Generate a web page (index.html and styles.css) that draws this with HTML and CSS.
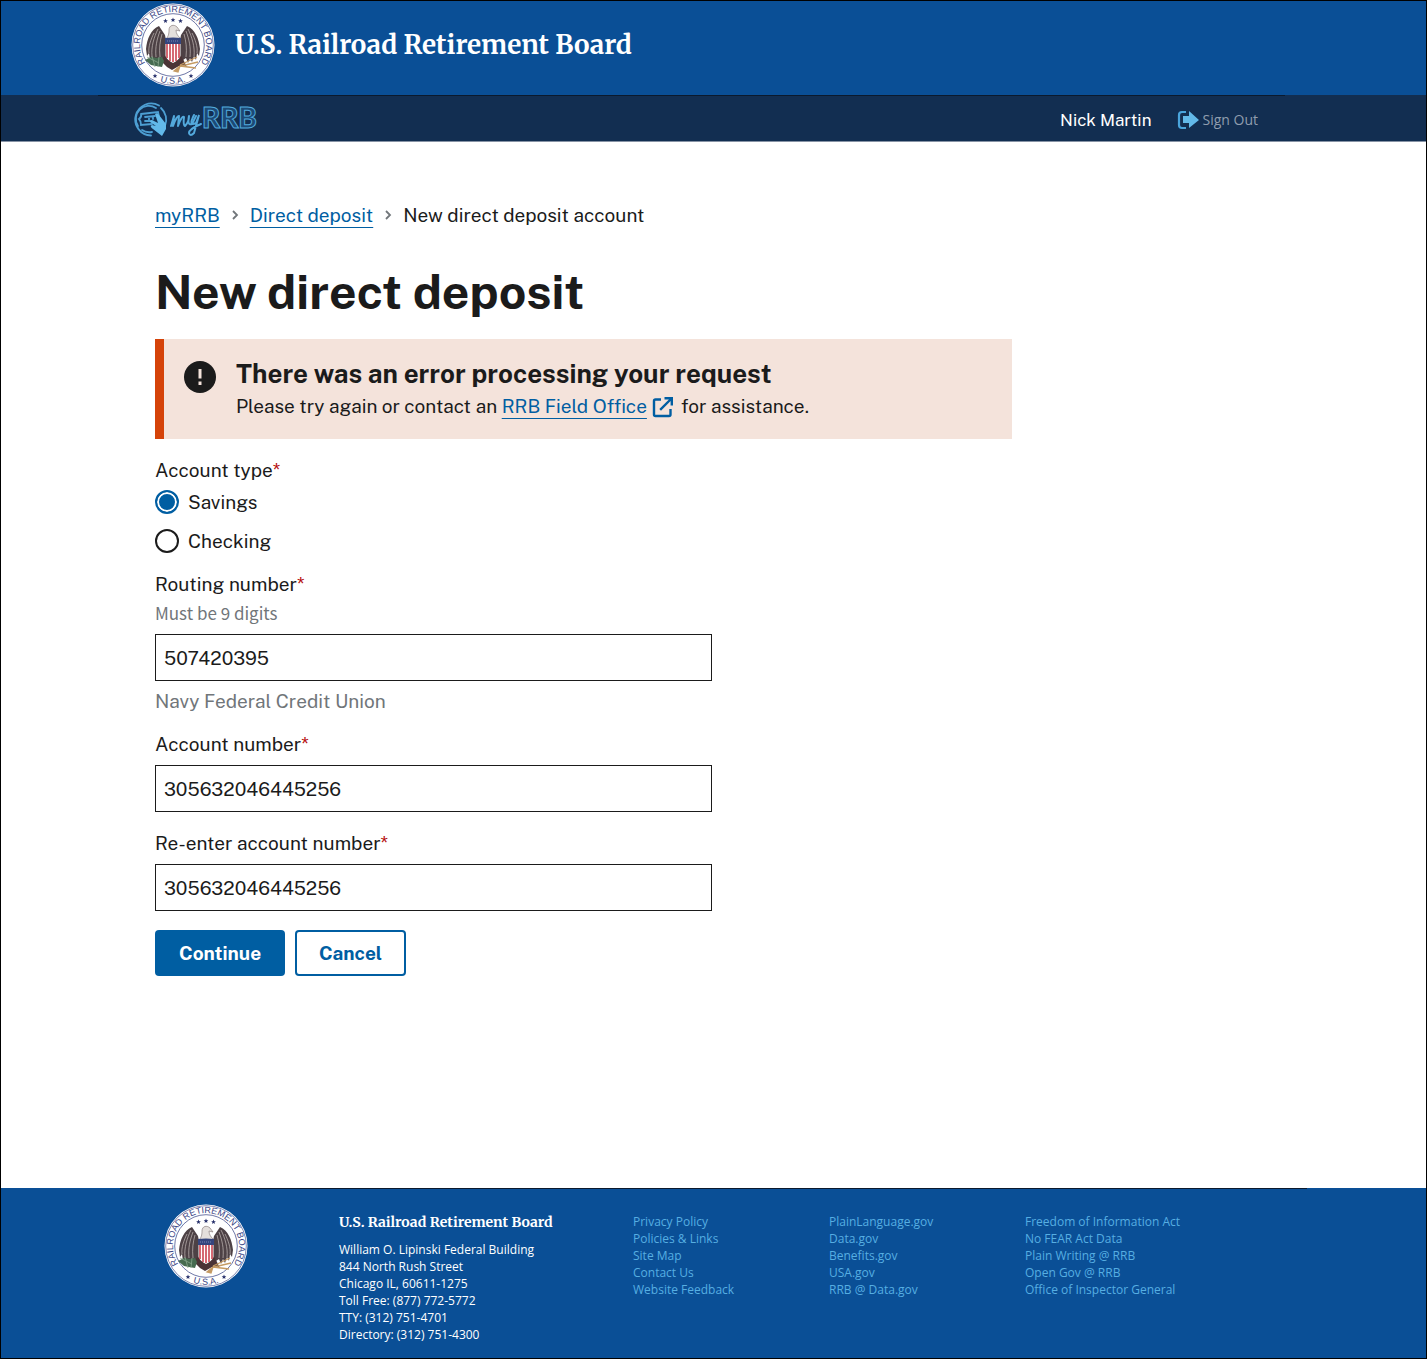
FILE: index.html
```html
<!DOCTYPE html>
<html lang="en">
<head>
<meta charset="utf-8">
<meta name="viewport" content="width=device-width, initial-scale=1">
<title>New direct deposit | myRRB</title>
<link rel="stylesheet" href="styles.css">
</head>
<body>
<svg class="sprite" width="0" height="0" aria-hidden="true">
  <defs>
    <path id="ring-top" d="M25.500 70.600A33 33 0 1 1 58.500 70.600"/>
    <path id="ring-bottom" d="M20 74A39 39 0 0 0 64 74"/>
    <path id="star" d="M0 -2.400L.7 -.8 2.300 -.7 1 .4 1.500 2 0 1.100 -1.500 2 -1 .4 -2.300 -.7 -.7 -.8Z"/>
    <path id="wing" d="M36 42L34 32L28 23C20 26 16 36 15 46L16 53L18 50L19 57L21 53L23 59L25 55L27 60L29 55L32 57L36 51Z"/>
    <symbol id="eagle" viewBox="0 0 84 84">
      <circle cx="42" cy="42" r="41.500" fill="#fff"/>
      <circle cx="42" cy="42" r="40.300" fill="none" stroke="#4a5590" stroke-width=".7"/>
      <circle cx="42" cy="42" r="31.300" fill="none" stroke="#4a5590" stroke-width=".8"/>
      <g fill="#27306b">
        <use href="#star" x="34.500" y="18"/><use href="#star" x="42" y="17"/><use href="#star" x="49.500" y="18"/>
        <use href="#star" x="24" y="73"/><use href="#star" x="60" y="73"/>
      </g>
      <use href="#wing" fill="#4d4145"/>
      <use href="#wing" fill="#4d4145" transform="matrix(-1 0 0 1 84 0)"/>
      <g fill="none" stroke="#c4bbb9" stroke-width=".7">
        <path d="M27 26C23 34 20 44 21 53M29 28C26 36 24 44 25 54M31 31C29 38 28 45 29 54M23 30C20 36 17 44 18 50"/>
        <path d="M57 26C61 34 64 44 63 53M55 28C58 36 60 44 59 54M53 31C55 38 56 45 55 54M61 30C64 36 67 44 66 50"/>
      </g>
      <path d="M35 36C38 33 38 29 38 27C38 22 43 21 46 24L49 28L45 27C45 31 47 33 50 36Z" fill="#e4dfdc" stroke="#8b8080" stroke-width=".7"/>
      <path d="M34 52L27 62L32 60L36 64L41 67L48 63L56 64L50 52Z" fill="#4b3436"/>
      <path d="M14 57L20 54L26 55L31 54L33 58L31 64L25 63L20 62Z" fill="#466b50"/>
      <path d="M16 54L28 60M21 53L24 64M28 54L27 64" stroke="#86a58a" stroke-width=".8"/>
      <path d="M49 62L66 54M50 63L67 59M49 63L65 65M43 68L49 63L47 69Z" stroke="#c59b64" stroke-width="1.300" fill="#c59b64"/>
      <path d="M34.500 36H49.500V53Q48 57 42 60Q36 57 34.500 53Z" fill="#fff"/>
      <path d="M36 40V55M39 40V58M42 40V59M45 40V58M48 40V55" stroke="#c73846" stroke-width="1.500"/>
      <path d="M34 35Q42 34 50 35V41H34Z" fill="#35457e"/>
      <path d="M36 38H48" stroke="#a7b3da" stroke-width=".6" stroke-dasharray="1 1"/>
      <text class="seal-text"><textPath href="#ring-top" startOffset="50%" text-anchor="middle">RAILROAD RETIREMENT BOARD</textPath></text>
      <text class="seal-text"><textPath href="#ring-bottom" startOffset="50%" text-anchor="middle">U.S.A.</textPath></text>
    </symbol>
  </defs>
</svg>
<div class="page">
  <header>
    <div class="masthead">
      <div class="wrap masthead-inner">
        <svg class="seal" role="img" aria-label="Seal"><use href="#eagle"/></svg>
        <span class="agency">U.S. Railroad Retirement Board</span>
      </div>
    </div>
    <nav class="userbar" aria-label="Account">
      <div class="wrap userbar-inner">
        <a class="logo" href="#">
          <svg width="128" height="38" viewBox="0 0 128 38">
            <g fill="none" stroke="#4d9fd3" stroke-width="1.800" stroke-linecap="round">
              <path d="M27 4.500A16 16 0 1 0 19 34.500"/>
              <path d="M6 25A13 13 0 0 1 24 7"/>
              <path d="M29 7A16 16 0 0 1 33 25"/>
              <path d="M10 29Q14 32 20 31"/>
              <path d="M9 13L26 11L28 20M9 13Q10 16 7 18Q9 20 9 24L20 23"/>
              <path d="M13 16L23 15M13 20L18 20M17 16V20M21 16V18"/>
            </g>
            <path d="M18 20Q19 18 22 20L26 22L23 13Q25 11 27 14L34 23L34 28L30 35L21 28Q17 25 20 24L24 25L18 21Z" fill="#62b9e9"/>
            <path d="M62 14Q56 26 64 22L67 14L62 32Q58 36 57 32Q57 28 69 23" fill="none" stroke="#53a9dc" stroke-width="2" stroke-linecap="round"/>
            <path d="M39 25L42 15L41 25Q45 14 47 15L46 25Q50 14 52 16Q51 24 53 25Q57 21 57 15Q55 25 60 23L64 15" fill="none" stroke="#53a9dc" stroke-width="2" stroke-linecap="round" stroke-linejoin="round"/>
            <text class="logo-rrb" x="70" y="27">RRB</text>
          </svg>
        </a>
        <span class="user">Nick Martin</span>
        <a class="signout" href="#">
          <svg width="22" height="20" viewBox="0 0 22 20">
            <path d="M9 2H5Q2 2 2 5V15Q2 18 5 18H9" fill="none" stroke="#4aa5dc" stroke-width="2.200"/>
            <path d="M6 6H12V1L22 10L12 18V13H6Z" fill="#62b9e9"/>
          </svg>Sign Out</a>
      </div>
    </nav>
  </header>

  <main class="wrap main">
    <nav class="crumbs" aria-label="Breadcrumbs">
      <a href="#">myRRB</a>
      <svg width="8" height="10" viewBox="0 0 8 10"><path d="M2 1L6 5L2 9" fill="none" stroke="#71767a" stroke-width="1.800"/></svg>
      <a href="#">Direct deposit</a>
      <svg width="8" height="10" viewBox="0 0 8 10"><path d="M2 1L6 5L2 9" fill="none" stroke="#71767a" stroke-width="1.800"/></svg>
      <span>New direct deposit account</span>
    </nav>
    <h1>New direct deposit</h1>
    <section class="alert" role="alert">
      <svg class="alert-icon" width="32" height="32" viewBox="0 0 32 32"><circle cx="16" cy="16" r="16" fill="#1b1b1b"/><path d="M14.500 8H17.500V17.500H14.500ZM14.500 20.500H17.500V24H14.500Z" fill="#f4e3db"/></svg>
      <div>
        <h2>There was an error processing your request</h2>
        <p>Please try again or contact an <a href="#">RRB Field Office</a><svg class="external" width="22" height="22" viewBox="0 0 22 22"><path d="M9 3.500H3.500Q2 3.500 2 5V18.500Q2 20 3.500 20H17Q18.500 20 18.500 18.500V13" fill="none" stroke="#005ea2" stroke-width="2.400"/><path d="M12.500 1H21V9.500H18.600V5.100L9 14.700L7.300 13L16.900 3.400H12.500Z" fill="#005ea2"/></svg>for assistance.</p>
      </div>
    </section>
    <form class="form">
      <fieldset>
        <legend>Account type<span class="req">*</span></legend>
        <label class="option"><input type="radio" name="type" checked>Savings</label>
        <label class="option"><input type="radio" name="type">Checking</label>
      </fieldset>
      <div class="field">
        <label for="routing">Routing number<span class="req">*</span></label>
        <span class="hint" id="routing-hint">Must be 9 digits</span>
        <input id="routing" type="text" value="507420395" aria-describedby="routing-hint">
        <span class="bank">Navy Federal Credit Union</span>
      </div>
      <div class="field">
        <label for="account">Account number<span class="req">*</span></label>
        <input id="account" type="text" value="305632046445256">
      </div>
      <div class="field">
        <label for="account2">Re-enter account number<span class="req">*</span></label>
        <input id="account2" type="text" value="305632046445256">
      </div>
      <div class="actions">
        <button class="btn primary" type="submit">Continue</button>
        <button class="btn outline" type="button">Cancel</button>
      </div>
    </form>
  </main>

  <footer class="footer">
    <div class="wrap footer-inner">
      <svg class="seal" role="img" aria-label="Seal"><use href="#eagle"/></svg>
      <address>
        <strong>U.S. Railroad Retirement Board</strong>
        William O. Lipinski Federal Building<br>
        844 North Rush Street<br>
        Chicago IL, 60611-1275<br>
        Toll Free: (877) 772-5772<br>
        TTY: (312) 751-4701<br>
        Directory: (312) 751-4300
      </address>
      <ul>
        <li><a href="#">Privacy Policy</a></li>
        <li><a href="#">Policies &amp; Links</a></li>
        <li><a href="#">Site Map</a></li>
        <li><a href="#">Contact Us</a></li>
        <li><a href="#">Website Feedback</a></li>
      </ul>
      <ul>
        <li><a href="#">PlainLanguage.gov</a></li>
        <li><a href="#">Data.gov</a></li>
        <li><a href="#">Benefits.gov</a></li>
        <li><a href="#">USA.gov</a></li>
        <li><a href="#">RRB @ Data.gov</a></li>
      </ul>
      <ul>
        <li><a href="#">Freedom of Information Act</a></li>
        <li><a href="#">No FEAR Act Data</a></li>
        <li><a href="#">Plain Writing @ RRB</a></li>
        <li><a href="#">Open Gov @ RRB</a></li>
        <li><a href="#">Office of Inspector General</a></li>
      </ul>
    </div>
  </footer>
</div>
</body>
</html>
```
FILE: styles.css
```css
* { box-sizing: border-box; }

body {
  margin: 0;
  color: #1b1b1b;
  background: #fff;
  font: 19px/24px "Public Sans", Inter, "Liberation Sans", sans-serif;
}

.sprite { display: block; }

.page {
  display: flex;
  flex-direction: column;
  min-height: 100vh;
  border: 1px solid #000;
}

.wrap {
  width: 100%;
  max-width: 1187px;
  margin: 0 auto;
}

.seal {
  width: 84px;
  height: 84px;
  flex: none;
}

.seal-text {
  font: 9px "Liberation Sans", sans-serif;
  fill: #3c4785;
}

/* Header */
.masthead { background: #0a4f96; }

.masthead-inner {
  display: flex;
  align-items: center;
  gap: 20px;
  padding: 2px 11px 8px;
}

.agency {
  color: #fff;
  font: bold 26px/36px Merriweather, "DejaVu Serif Condensed", "Liberation Serif", serif;
}

.userbar {
  padding-right: 44px;
  background: #122e51;
  border-bottom: 1px solid #8793a5;
}

.userbar-inner {
  display: flex;
  align-items: center;
  height: 46px;
  padding: 2px 27px 0 34px;
  border-top: 1px solid #0b1a2e;
}

.logo {
  display: flex;
  margin-right: auto;
}

.logo-rrb {
  font: 900 28px Lato, sans-serif;
  fill: #1c4a76;
  stroke: #53a9dc;
  stroke-width: 1px;
}

.user {
  margin-right: 26px;
  color: #fff;
  font-size: 17px;
}

.signout {
  display: flex;
  align-items: center;
  gap: 3px;
  color: #8f9dae;
  font: 14px/20px "Open Sans", sans-serif;
  text-decoration: none;
}

/* Content */
.main {
  flex: 1;
  padding: 61px 36px 40px 35px;
}

.main a {
  color: #005ea2;
  text-underline-offset: 5px;
  text-decoration-thickness: 1px;
}

.crumbs {
  display: flex;
  align-items: center;
  gap: 11px;
}

h1 {
  margin: 37px 0 19px;
  font-size: 48px;
  line-height: 56px;
}

.alert {
  display: flex;
  gap: 20px;
  max-width: 857px;
  padding: 19px 20px 21px;
  background: #f4e3db;
  border-left: 9px solid #d54309;
}

.alert-icon {
  flex: none;
  margin-top: 3px;
}

h2 {
  margin: 0 0 4px;
  font-size: 26px;
  line-height: 32px;
}

.alert p { margin: 0; }

.external {
  margin: 0 7px 0 5px;
  vertical-align: -5px;
}

.form {
  display: flex;
  flex-direction: column;
  gap: 19px;
  max-width: 557px;
  margin-top: 19px;
}

fieldset {
  margin: 0;
  padding: 0;
  border: 0;
}

legend { padding: 0; }

.req { color: #b50909; }

.option {
  display: flex;
  align-items: center;
  gap: 9px;
  margin: 8px 0 15px;
}

.option + .option { margin-bottom: 0; }

.option input {
  appearance: none;
  width: 24px;
  height: 24px;
  margin: 0;
  border: 2px solid #1b1b1b;
  border-radius: 50%;
}

.option input:checked {
  border-color: #005ea2;
  background: #005ea2;
  box-shadow: inset 0 0 0 2px #fff;
}

.field {
  display: flex;
  flex-direction: column;
}

.field input {
  height: 47px;
  margin-top: 9px;
  padding: 0 8px;
  color: inherit;
  background: #fff;
  border: 1px solid #1b1b1b;
  border-radius: 0;
  font: inherit;
}

.hint {
  margin-top: 5px;
  color: #71767a;
  font: 17px/24px "Source Sans Pro", "Noto Sans CJK JP", sans-serif;
}

.bank {
  margin-top: 8px;
  color: #71767a;
}

.actions {
  display: flex;
  gap: 10px;
}

.btn {
  height: 46px;
  padding: 0 24px;
  border: 0;
  border-radius: 4px;
  font: bold 19px/24px "Public Sans", Inter, sans-serif;
}

.primary {
  color: #fff;
  background: #005ea2;
}

.outline {
  color: #005ea2;
  background: #fff;
  box-shadow: inset 0 0 0 2px #005ea2;
}

/* Footer */
.footer {
  color: #fff;
  background: #0a4f96;
  font: 12px/17px "Open Sans", sans-serif;
}

.footer-inner {
  display: grid;
  grid-template-columns: 175px 294px 196px 196px 1fr;
  min-height: 170px;
  padding: 15px 0 12px 44px;
  border-top: 1px solid #0b1a2e;
}

address {
  padding-top: 8px;
  font-style: normal;
}

address strong {
  display: block;
  margin-bottom: 9px;
  font: bold 14px/20px Merriweather, "DejaVu Serif Condensed", "Liberation Serif", serif;
}

.footer ul {
  margin: 0;
  padding: 9px 0 0;
  list-style: none;
}

.footer a {
  color: #56aee2;
  text-decoration: none;
}
```
